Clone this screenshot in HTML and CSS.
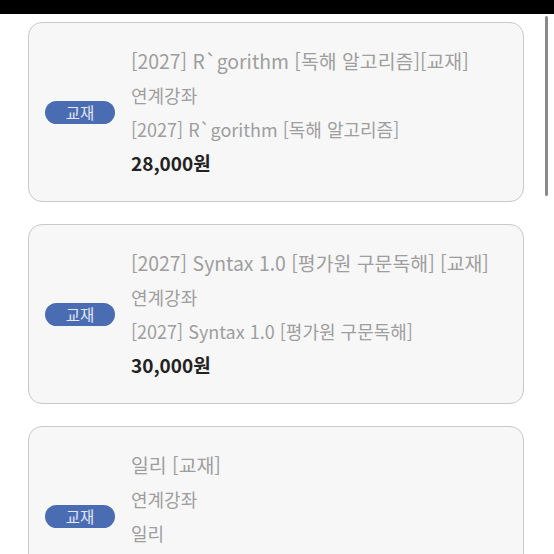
FILE: index.html
```html
<!DOCTYPE html>
<html lang="ko">
<head>
  <meta charset="UTF-8" />
  <meta name="viewport" content="width=device-width, initial-scale=1.0" />
  <title>교재 목록</title>
  <link rel="stylesheet" href="styles.css">
</head>
<body>
  <div class="status-bar"></div>

  <div class="book-list">
    <div class="book-card">
      <span class="badge">교재</span>
      <div class="book-info">
        <div class="book-title">[2027] R`gorithm [독해 알고리즘][교재]</div>
        <div class="book-sub">연계강좌</div>
        <div class="book-sub">[2027] R`gorithm [독해 알고리즘]</div>
        <div class="book-price">28,000원</div>
      </div>
    </div>

    <div class="book-card">
      <span class="badge">교재</span>
      <div class="book-info">
        <div class="book-title">[2027] Syntax 1.0 [평가원 구문독해] [교재]</div>
        <div class="book-sub">연계강좌</div>
        <div class="book-sub">[2027] Syntax 1.0 [평가원 구문독해]</div>
        <div class="book-price">30,000원</div>
      </div>
    </div>

    <div class="book-card">
      <span class="badge">교재</span>
      <div class="book-info">
        <div class="book-title">일리 [교재]</div>
        <div class="book-sub">연계강좌</div>
        <div class="book-sub">일리</div>
        <div class="book-price">20,000원</div>
      </div>
    </div>
  </div>

  <div class="scroll-thumb"></div>
</body>
</html>
```

FILE: styles.css
```css
html, body {
  overflow: hidden;
}

body {
  margin: 0;
  background-color: #ffffff;
  font-family: "Noto Sans CJK KR", "Noto Sans", sans-serif;
  position: relative;
}

.status-bar {
  height: 14px;
  background-color: #000;
}

.book-list {
  display: flex;
  flex-direction: column;
  gap: 22px;
  padding: 8px 30px 20px 28px;
}

.book-card {
  display: flex;
  align-items: center;
  gap: 16px;
  height: 180px;
  box-sizing: border-box;
  padding: 0 16px;
  background-color: #f7f7f7;
  border: 1.5px solid #c9c9c9;
  border-radius: 14px;
}

.badge {
  flex: none;
  width: 70px;
  height: 23px;
  line-height: 23px;
  text-align: center;
  font-size: 15.5px;
  color: #e3e8f3;
  background-color: #4a6cb3;
  border-radius: 9999px;
}

.book-info {
  display: flex;
  flex-direction: column;
}

.book-title,
.book-sub {
  font-size: 18px;
  line-height: 34px;
  color: #9e9e9e;
  white-space: nowrap;
}

.book-title {
  font-size: 19.4px;
}

.book-price {
  font-size: 19px;
  line-height: 34px;
  font-weight: bold;
  color: #222;
}

.scroll-thumb {
  position: absolute;
  top: 16px;
  left: 545px;
  width: 3px;
  height: 180px;
  background-color: #8a8a8a;
  border-radius: 2px;
}
```
